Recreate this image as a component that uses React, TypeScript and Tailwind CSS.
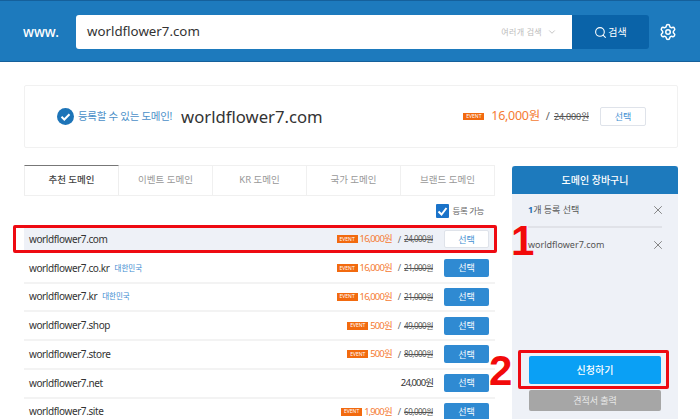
import { ChevronDown, Search, Settings, X } from "lucide-react";

const sans = "font-['Noto_Sans','Noto_Sans_CJK_KR',sans-serif]";

const tabs = ["추천 도메인", "이벤트 도메인", "KR 도메인", "국가 도메인", "브랜드 도메인"];

type Row = { name: string; tag?: string; event?: boolean; price: string; old?: string };

const rows: Row[] = [
  { name: "worldflower7.com", event: true, price: "16,000원", old: "24,000원" },
  { name: "worldflower7.co.kr", tag: "대한민국", event: true, price: "16,000원", old: "21,000원" },
  { name: "worldflower7.kr", tag: "대한민국", event: true, price: "16,000원", old: "21,000원" },
  { name: "worldflower7.shop", event: true, price: "500원", old: "49,000원" },
  { name: "worldflower7.store", event: true, price: "500원", old: "80,000원" },
  { name: "worldflower7.net", price: "24,000원" },
  { name: "worldflower7.site", event: true, price: "1,900원", old: "60,000원" },
];

function EventBadge() {
  return (
    <span className="flex h-[8px] w-[21px] items-center justify-center bg-[#f26a0f] text-[5px] leading-none text-white">
      EVENT
    </span>
  );
}

function DomainRow({ row, selected }: { row: Row; selected: boolean }) {
  return (
    <div className={`flex h-[28.75px] shrink-0 items-center border-b-2 pl-[5px] pr-[6px] ${selected ? "border-white bg-[#eef1f7]" : "border-[#f3f3f3]"}`}>
      <span className="text-[10px] tracking-[-0.4px] text-[#333]">{row.name}</span>
      {row.tag && <span className="ml-[5px] text-[7.5px] text-[#3d8bd0]">{row.tag}</span>}
      <div className="ml-auto flex items-center">
        {row.event && <EventBadge />}
        <span className={`ml-[2px] text-[9.5px] tracking-[-0.9px] ${row.event ? "text-[#f57b33]" : "text-[#333]"}`}>{row.price}</span>
        {row.old && (
          <>
            <span className="ml-[6px] mr-[3px] text-[9px] text-[#666]">/</span>
            <span className="text-[8px] tracking-[-0.5px] text-[#555] line-through">{row.old}</span>
          </>
        )}
      </div>
      <button
        className={`ml-[11px] h-[18px] w-[45px] rounded-[2px] text-[9px] ${selected ? "border border-[#dfe3ea] bg-white text-[#3f8fd2]" : "bg-[#2f8ad2] text-white"}`}
      >
        선택
      </button>
    </div>
  );
}

export default function App() {
  return (
    <div className={`relative h-[419px] w-[700px] overflow-hidden bg-white ${sans}`}>
      {/* search bar */}
      <header className="flex h-[62px] items-center border-y border-y-[#15609b] bg-[#1d7abd] pl-[23px] pt-[2px]">
        <span className="w-[53px] text-[13.5px] font-medium text-white">www.</span>
        <div className="flex h-[34px] w-[496px] items-center rounded-l-[3px] bg-white pl-[11px] pr-[15px]">
          <span className="text-[13.3px] text-[#333]">worldflower7.com</span>
          <span className="ml-auto text-[8px] tracking-[0.3px] text-[#bbb]">여러개 검색</span>
          <ChevronDown size={10} className="ml-[5px] text-[#bbb]" />
        </div>
        <button className="flex h-[34px] w-[77px] items-center justify-center gap-[1px] rounded-r-[3px] bg-[#0a63a8] text-[10px] text-white">
          <Search size={13} />
          검색
        </button>
        <Settings size={18} strokeWidth={2} className="ml-[10px] text-white" />
      </header>

      <main className="pl-[24px] pr-[22px] pt-[23px]">
        {/* result card */}
        <section className="flex h-[63px] w-[654px] items-center rounded-[2px] border border-[#f1f1f1] pl-[32px] pr-[31px]">
          <svg width="17" height="17" viewBox="0 0 17 17">
            <circle cx="8.5" cy="8.5" r="8.5" fill="#1d74b8" />
            <path d="M4.5 8.8l2.8 2.7 5.2-5.3" fill="none" stroke="#fff" strokeWidth="2" />
          </svg>
          <span className="ml-[4px] text-[10.5px] tracking-[-0.3px] text-[#4b8fc8]">등록할 수 있는 도메인!</span>
          <span className="ml-[9px] text-[16.7px] text-[#333]">worldflower7.com</span>
          <div className="ml-auto flex items-center">
            <span className="flex h-[7px] w-[21px] items-center justify-center bg-[#f26a0f] text-[5px] leading-none text-white">EVENT</span>
            <span className="ml-[7px] text-[12.5px] tracking-[-0.3px] text-[#f57b33]">16,000원</span>
            <span className="ml-[6px] mr-[4px] text-[11px] text-[#666]">/</span>
            <span className="text-[9px] tracking-[-0.2px] text-[#555] line-through">24,000원</span>
            <button className="ml-[11px] h-[19px] w-[46px] rounded-[2px] border border-[#dfe3ea] bg-white text-[9px] text-[#3f8fd2]">선택</button>
          </div>
        </section>

        <div className="mt-[17px] flex gap-[17px]">
          {/* domain list */}
          <div className="flex w-[471px] shrink-0 flex-col">
            <div className="flex h-[31px] border-b border-[#f0f0f0]">
              {tabs.map((t, i) => (
                <div
                  key={t}
                  className={`flex flex-1 items-center justify-center text-[9.5px] ${
                    i === 0
                      ? "border-t border-t-[#777] border-r border-r-[#eee] border-l border-l-[#eee] font-medium text-[#444]"
                      : "border-t border-t-[#f0f0f0] border-r border-r-[#f0f0f0] text-[#999]"
                  }`}
                >
                  {t}
                </div>
              ))}
            </div>
            <label className="mt-[8px] flex h-[14px] items-center justify-end gap-[4px] pr-[11px] text-[8.5px] tracking-[-0.4px] text-[#666]">
              <span className="flex h-[14px] w-[13px] items-center justify-center rounded-[1px] bg-[#1a73c9]">
                <svg width="11" height="11" viewBox="0 0 11 11">
                  <path d="M1.5 5.5l3 3 5-6.5" fill="none" stroke="#fff" strokeWidth="2" />
                </svg>
              </span>
              등록 가능
            </label>
            <div className="mt-[8px] flex flex-col">
              {rows.map((r, i) => (
                <DomainRow key={r.name} row={r} selected={i === 0} />
              ))}
            </div>
          </div>

          {/* cart */}
          <aside className="mt-[1px] flex h-[260px] w-[166px] shrink-0 flex-col bg-[#eef1f7]">
            <div className="flex h-[28px] shrink-0 items-center justify-center rounded-t-[3px] bg-[#1d7abd] text-[10px] font-medium text-white">도메인 장바구니</div>
            <div className="mx-[16px] flex h-[34px] shrink-0 items-center justify-between border-b-2 border-[#e0e2e8] text-[9px] text-[#555]">
              <span><b className="text-[#1d6fb3]">1</b>개 등록 선택</span>
              <X size={14} strokeWidth={1.5} className="mr-[-3px] text-[#777]" />
            </div>
            <div className="mx-[16px] flex h-[34px] shrink-0 items-center justify-between text-[9px] text-[#555]">
              <span>worldflower7.com</span>
              <X size={14} strokeWidth={1.5} className="mr-[-3px] text-[#777]" />
            </div>
            <button className="mx-[17px] mt-[94px] h-[28px] shrink-0 rounded-[2px] bg-[#0aa0f5] text-[10px] font-medium text-white">신청하기</button>
            <button className="mx-[17px] mt-[6px] h-[21px] shrink-0 rounded-[2px] bg-[#a6a6a6] text-[9px] text-[#e8e8e8]">견적서 출력</button>
          </aside>
        </div>
      </main>

      {/* annotations on top of the screenshot */}
      <div className="absolute left-[13px] top-[225px] h-[28px] w-[484px] rounded-[2px] border-[3px] border-[#ee0a12]" />
      <div className="absolute left-[518px] top-[350px] h-[39px] w-[151px] rounded-[2px] border-[3px] border-[#ee0a12]" />
      <span className="absolute left-[511px] top-[220px] font-['Liberation_Sans',sans-serif] text-[42px] font-bold leading-none text-[#f20a0a]">1</span>
      <span className="absolute left-[489px] top-[350px] font-['Liberation_Sans',sans-serif] text-[42px] font-bold leading-none text-[#f20a0a]">2</span>
    </div>
  );
}
